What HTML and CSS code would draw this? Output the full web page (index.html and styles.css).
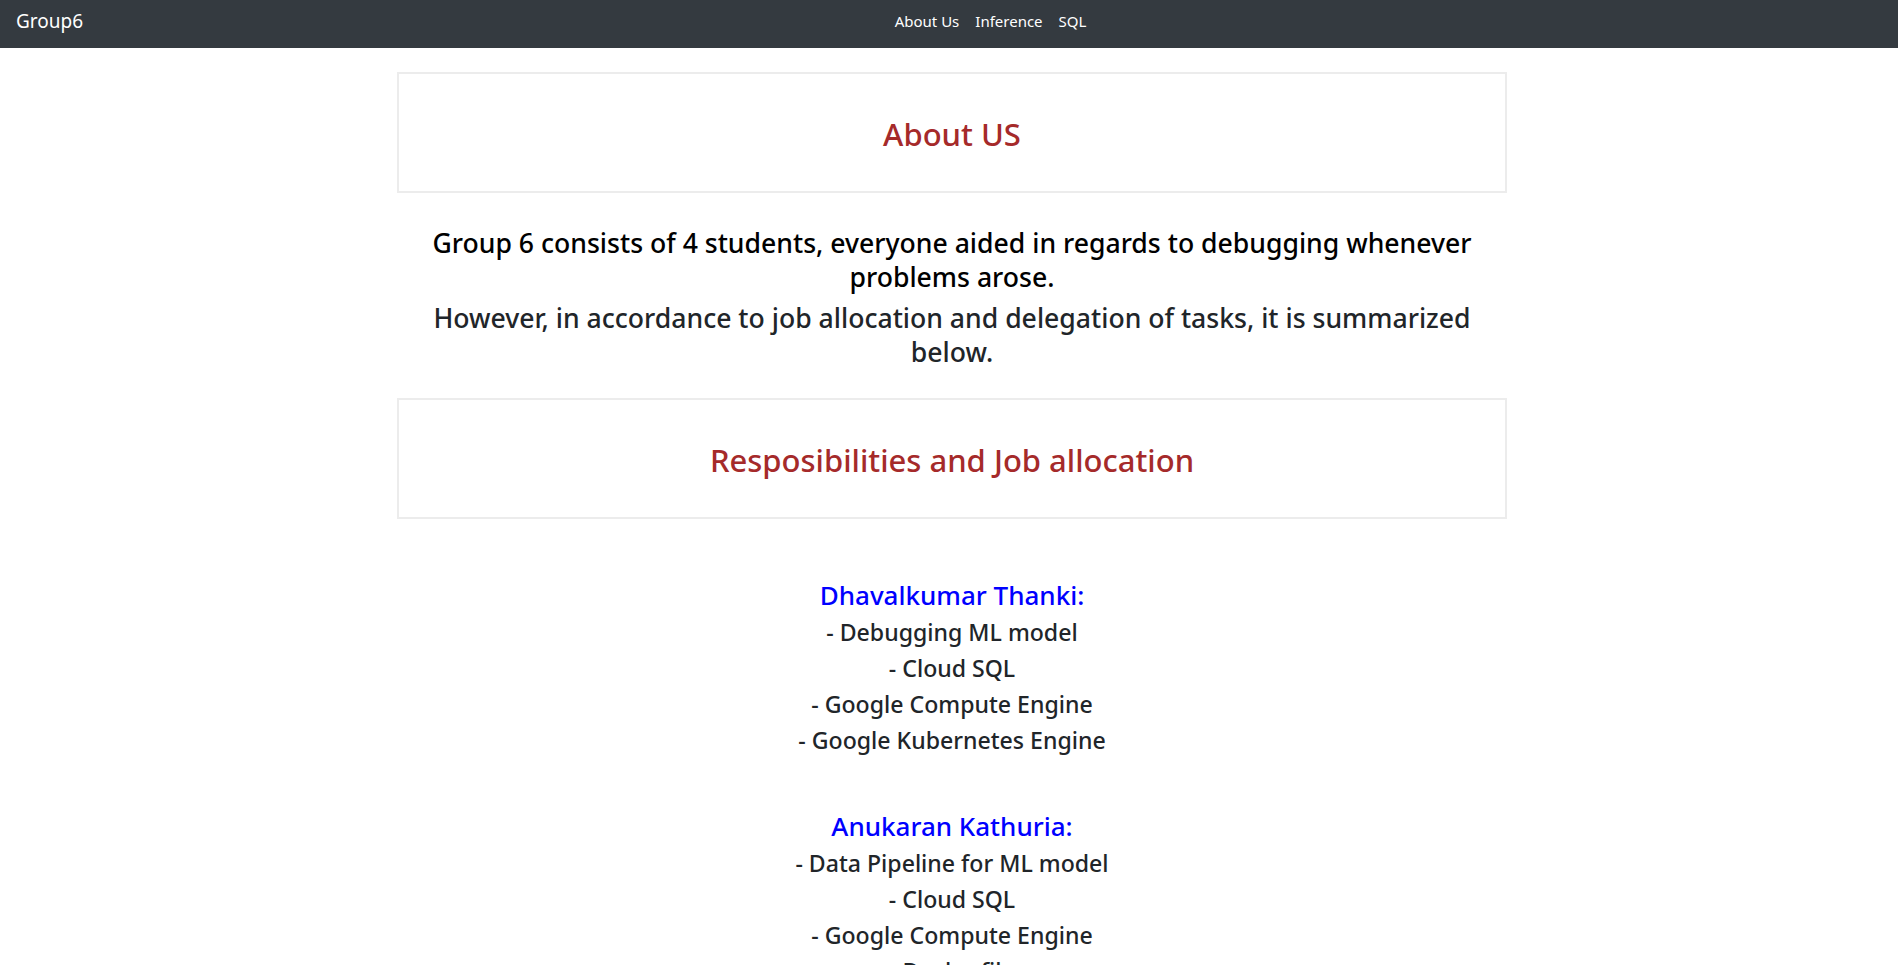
FILE: index.html
```html
<!DOCTYPE html>
<html lang="en">
<head>
<meta charset="utf-8">
<title>About Us - Group6</title>
<link rel="stylesheet" href="styles.css">
</head>
<body>
<nav class="navbar">
  <a class="brand" href="#">Group6</a>
  <ul class="nav">
    <li><a class="nav-link" href="#">About Us</a></li>
    <li><a class="nav-link" href="#">Inference</a></li>
    <li><a class="nav-link" href="#">SQL</a></li>
  </ul>
</nav>
<main class="container">
  <section class="card">
    <h2 class="card-title">About US</h2>
  </section>
  <div class="intro">
    <h3 class="intro-lead">Group 6 consists of 4 students, everyone aided in regards to debugging whenever problems arose.</h3>
    <h3 class="intro-sub">However, in accordance to job allocation and delegation of tasks, it is summarized below.</h3>
  </div>
  <section class="card">
    <h2 class="card-title">Resposibilities and Job allocation</h2>
  </section>
  <div class="people">
    <div class="person">
      <h4 class="person-name">Dhavalkumar Thanki:</h4>
      <p class="task">- Debugging ML model</p>
      <p class="task">- Cloud SQL</p>
      <p class="task">- Google Compute Engine</p>
      <p class="task">- Google Kubernetes Engine</p>
    </div>
    <div class="person">
      <h4 class="person-name">Anukaran Kathuria:</h4>
      <p class="task">- Data Pipeline for ML model</p>
      <p class="task">- Cloud SQL</p>
      <p class="task">- Google Compute Engine</p>
      <p class="task">- Dockerfile</p>
    </div>
  </div>
</main>
</body>
</html>
```
FILE: styles.css
```css
* { box-sizing: border-box; }
html, body { margin: 0; padding: 0; }
body {
  font-family: "Noto Sans", "Open Sans", "DejaVu Sans", sans-serif;
  color: #212529;
  background: #fff;
  font-size: 16px;
  line-height: 1.5;
}
a { text-decoration: none; }

.navbar {
  display: flex;
  align-items: center;
  height: 48px;
  padding: 0 16px 6px;
  background: #343a40;
}
.brand {
  color: #fff;
  font-size: 19px;
  line-height: 26px;
  margin-right: 16px;
}
.nav {
  flex: 1;
  display: flex;
  justify-content: center;
  list-style: none;
  margin: 0;
  padding: 0;
}
.nav-link {
  display: block;
  padding: 0 8px;
  color: #fff;
  font-size: 15px;
  line-height: 24px;
}

.container {
  width: 1110px;
  margin: 24px 0 0 calc(50% - 552px);
  text-align: center;
}
.card {
  border: 2px solid #ececec;
  padding: 41px 0 38px;
}
.card-title {
  margin: 0;
  font-size: 31px;
  font-weight: 500;
  line-height: 38px;
  color: #a52a2a;
}

.intro {
  margin: 34px 0 29px;
}
.intro-lead, .intro-sub {
  margin: 0;
  font-size: 26.6px;
  font-weight: 500;
  line-height: 33.6px;
}
.intro-lead { color: #000; margin-bottom: 8px; }
.intro-sub { color: #212529; }

.people {
  padding-top: 57px;
}
.person + .person { margin-top: 49px; }
.person-name {
  margin: 0;
  font-size: 26px;
  font-weight: 500;
  line-height: 38px;
  color: #0000ff;
}
.task {
  margin: 0;
  font-size: 23.1px;
  font-weight: 500;
  line-height: 36px;
  color: #212529;
}
```
